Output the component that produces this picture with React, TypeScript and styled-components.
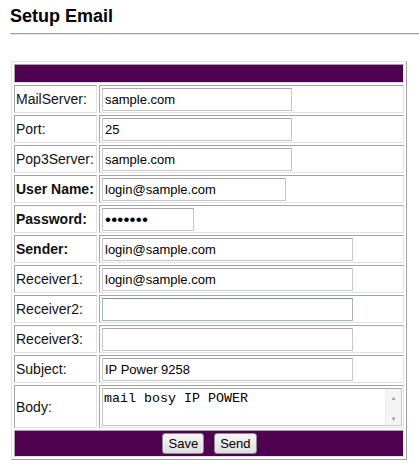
import React from "react";
import styled, { createGlobalStyle } from "styled-components";

const GlobalStyle = createGlobalStyle`
  html, body {
    margin: 0;
    padding: 0;
    background: #ffffff;
    font-family: "Liberation Sans", Arial, sans-serif;
    color: #000;
  }
`;

const Page = styled.div`
  width: 419px;
`;

const Title = styled.h1`
  margin: 5px 0 0 10px;
  font-size: 18px;
  line-height: 22px;
  font-weight: bold;
  color: #000;
`;

const Rule = styled.div`
  margin: 6px 0 0 10px;
  border-top: 1px solid #9c9c9c;
  border-bottom: 1px solid #ececec;
`;

const FormTable = styled.table`
  margin: 26px 0 0 11px;
  width: 396px;
  border-collapse: separate;
  border-spacing: 2px;
  border: 1px solid;
  border-color: #e2e2e2 #a0a0a0 #a0a0a0 #e2e2e2;
`;

const Cell = styled.td`
  border: 1px solid;
  border-color: #a3a3a3 #e2e2e2 #e2e2e2 #a3a3a3;
  box-sizing: border-box;
`;

const HeaderCell = styled(Cell)`
  background: #500050;
  padding: 0;
`;

const HeaderFill = styled.div`
  height: 17px;
`;

const LabelCell = styled(Cell)<{ $bold?: boolean }>`
  width: 83px;
  padding: 0 0 0 1px;
  font-size: 14px;
  font-weight: ${(p) => (p.$bold ? "bold" : "normal")};
  vertical-align: middle;
  white-space: nowrap;
  color: #111;
`;

const ValueCell = styled(Cell)`
  padding: 2px 1px 1px 2px;
  vertical-align: middle;
`;

const TextField = styled.input<{ $w: number; $accent?: boolean; $masked?: boolean }>`
  display: block;
  box-sizing: border-box;
  width: ${(p) => p.$w}px;
  height: 23px;
  margin: 0;
  padding: 0 2px;
  border: 1px solid ${(p) => (p.$accent ? "#a3b6bf" : "#c6c6c6")};
  border-top-color: ${(p) => (p.$accent ? "#7d939d" : "#a9a9a9")};
  font-family: "Liberation Sans", Arial, sans-serif;
  font-size: ${(p) => (p.$masked ? "17px" : "13px")};
  letter-spacing: ${(p) => (p.$masked ? "0.2px" : "normal")};
  color: #000;
  background: #fff;
  outline: none;
`;

const AreaBox = styled.div`
  display: flex;
  box-sizing: border-box;
  width: 300px;
  height: 38px;
  border: 1px solid #c6c6c6;
  border-top-color: #a9a9a9;
  background: #fff;
`;

const Area = styled.textarea`
  flex: 1;
  margin: 0;
  padding: 2px 1px;
  border: none;
  resize: none;
  overflow: hidden;
  outline: none;
  font-family: "Liberation Mono", "Courier New", monospace;
  font-size: 13.33px;
  line-height: 15px;
  color: #000;
  background: #fff;
`;

const ScrollBar = styled.div`
  width: 15px;
  display: flex;
  flex-direction: column;
  justify-content: space-between;
  align-items: center;
  padding: 6px 0 3px;
  background: #f4f4f4;
  border-left: 1px solid #ececec;
  font-size: 6px;
  line-height: 6px;
  color: #a0a0a0;
`;

const FooterCell = styled(HeaderCell)`
  padding: 2px 0;
`;

const ButtonRow = styled.div`
  display: flex;
  justify-content: center;
  gap: 10px;
  padding-left: 1px;
`;

const Button = styled.button`
  height: 21px;
  margin: 0;
  padding: 0 5px;
  border: 1px solid #8e8e8e;
  border-radius: 3px;
  background: linear-gradient(#f6f6f6, #dedede);
  font-family: "Liberation Sans", Arial, sans-serif;
  font-size: 13px;
  color: #000;
`;

type Field = {
  label: string;
  bold?: boolean;
  value: string;
  width: number;
  type?: string;
  accent?: boolean;
};

const fields: Field[] = [
  { label: "MailServer:", value: "sample.com", width: 190 },
  { label: "Port:", value: "25", width: 190 },
  { label: "Pop3Server:", value: "sample.com", width: 190 },
  { label: "User Name:", bold: true, value: "login@sample.com", width: 184 },
  { label: "Password:", bold: true, value: "1234567", width: 92, type: "password" },
  { label: "Sender:", bold: true, value: "login@sample.com", width: 251 },
  { label: "Receiver1:", value: "login@sample.com", width: 251 },
  { label: "Receiver2:", value: "", width: 251, accent: true },
  { label: "Receiver3:", value: "", width: 251 },
  { label: "Subject:", value: "IP Power 9258", width: 251 },
];

export default function App() {
  return (
    <Page>
      <GlobalStyle />
      <Title>Setup Email</Title>
      <Rule />
      <FormTable>
        <tbody>
          <tr>
            <HeaderCell colSpan={2}>
              <HeaderFill />
            </HeaderCell>
          </tr>
          {fields.map((f) => (
            <tr key={f.label}>
              <LabelCell $bold={f.bold}>{f.label}</LabelCell>
              <ValueCell>
                <TextField
                  type={f.type ?? "text"}
                  defaultValue={f.value}
                  $w={f.width}
                  $accent={f.accent}
                  $masked={f.type === "password"}
                />
              </ValueCell>
            </tr>
          ))}
          <tr>
            <LabelCell>Body:</LabelCell>
            <ValueCell>
              <AreaBox>
                <Area defaultValue="mail bosy IP POWER" />
                <ScrollBar>
                  <span>▲</span>
                  <span>▼</span>
                </ScrollBar>
              </AreaBox>
            </ValueCell>
          </tr>
          <tr>
            <FooterCell colSpan={2}>
              <ButtonRow>
                <Button type="button">Save</Button>
                <Button type="button">Send</Button>
              </ButtonRow>
            </FooterCell>
          </tr>
        </tbody>
      </FormTable>
    </Page>
  );
}
